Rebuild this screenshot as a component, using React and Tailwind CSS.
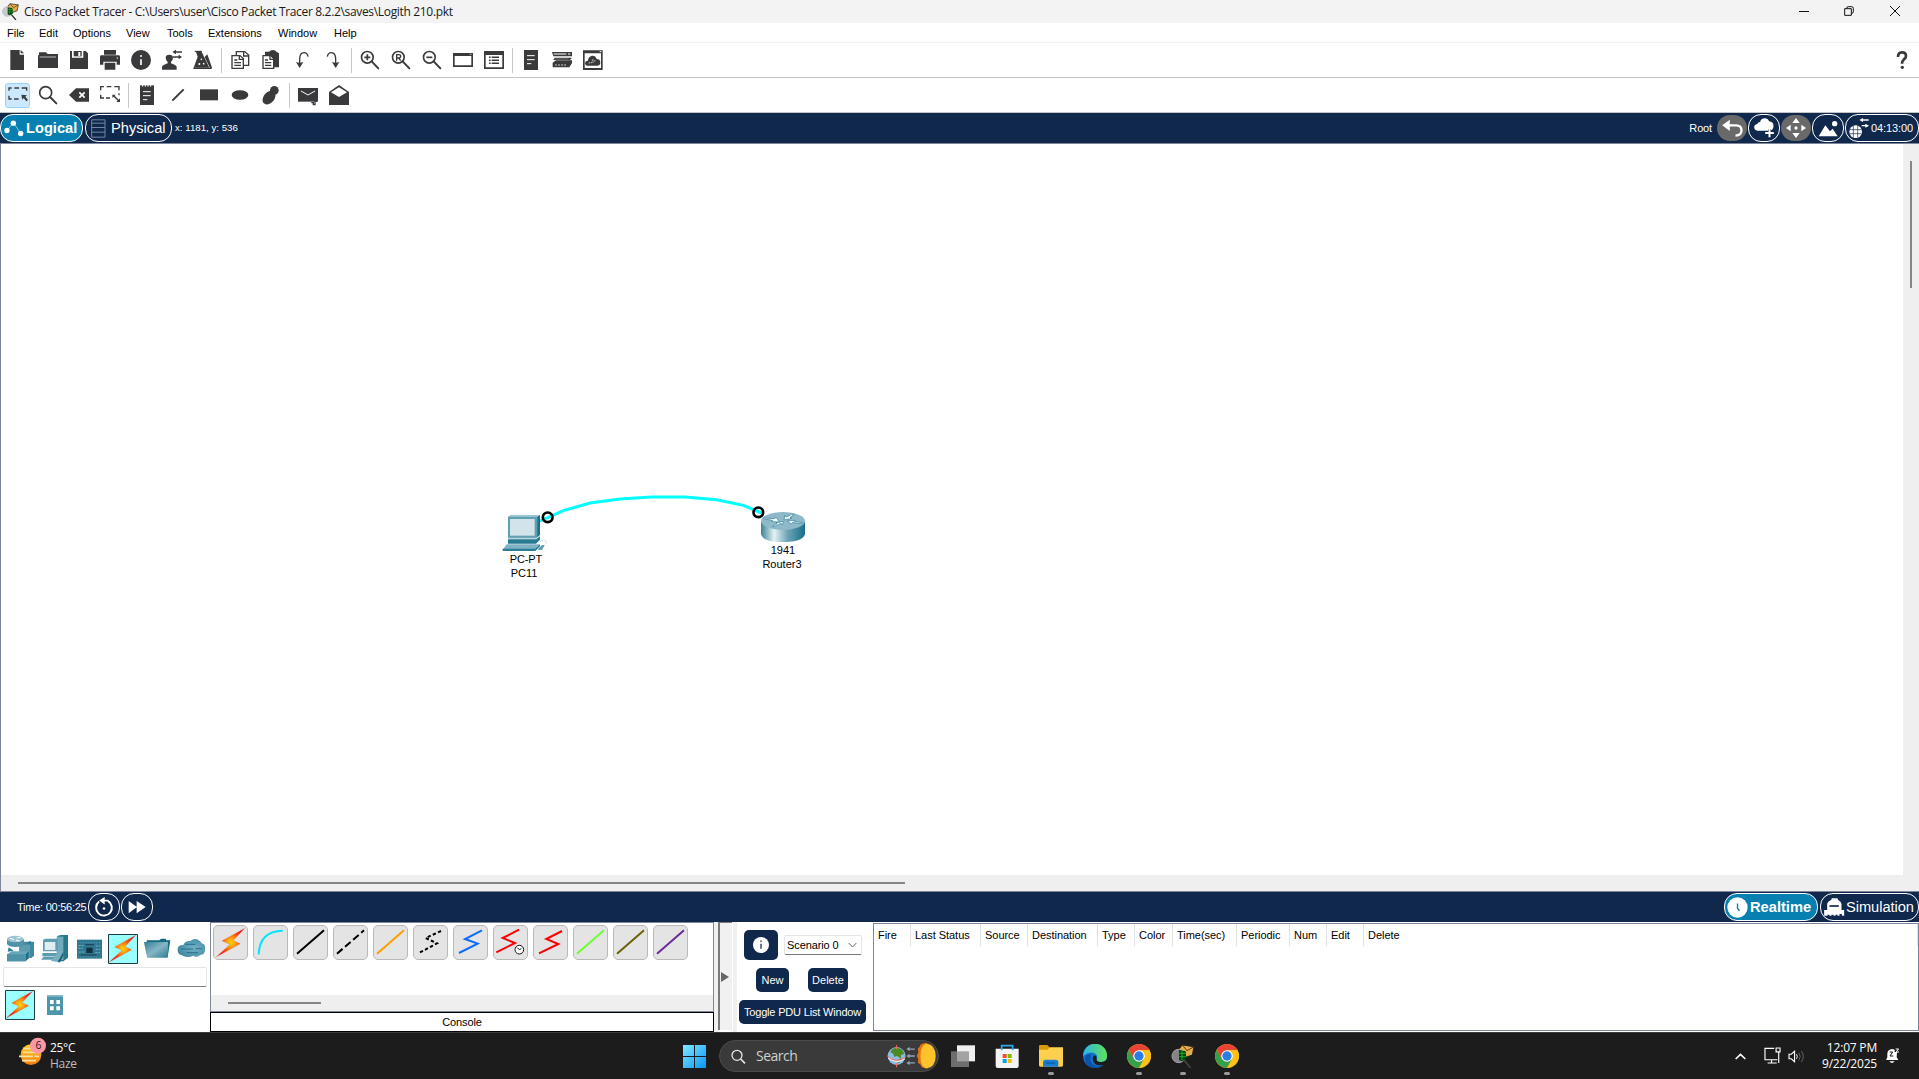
import React from "react";

const INK = "#3a3a3c";
const UI = "font-['Liberation_Sans',Arial,sans-serif]";
const SEGOE = "font-['Open_Sans','Noto_Sans',sans-serif]";

function Svg({ v, className = "", children, ...rest }) {
  return (
    <svg viewBox={v} className={"block shrink-0 " + className} fill={INK} {...rest}>
      {children}
    </svg>
  );
}

function Tool({ v, children, active }) {
  return (
    <div className="flex h-[25px] w-[31px] shrink-0 items-center justify-start pl-[4px]">
      <div className={active ? "flex h-[25px] w-[25px] pl-px items-center rounded-[3px] border border-[#99d1ff] bg-[#cce8ff]" : "flex h-[25px] items-center pl-[2px]"}>
        <Svg v={v} className="h-5 w-5 overflow-visible">{children}</Svg>
      </div>
    </div>
  );
}

function Sep() {
  return <div className="flex w-[6px] shrink-0 pl-[3px]"><div className="h-[25px] w-px bg-[#c8c8c8]" /></div>;
}

const lens = (x) => (
  <g fill="none" stroke={INK}>
    <circle cx={x} cy="52" r="17.5" strokeWidth="5" />
    <path d={`M${x + 13} 64l20 21`} strokeWidth="6" strokeLinecap="round" />
  </g>
);

function MainToolbar() {
  return (
    <div className="flex h-[35px] items-center border-b border-[#c3c3c3] pl-px">
      <Tool v="21 150 60 60"><path d="M31 150h28v14h13v46H31z" /><path d="M62 150l10 10H62z" /></Tool>
      <Tool v="114 150 60 60"><path d="M117 157h21l5 5h31v42h-57z" /><path d="M118 171h50" stroke="#fff" strokeWidth="2" /><path d="M114 166h4v38h-4z" /></Tool>
      <Tool v="207 150 60 60"><path d="M210 153h6v20h34v-20h7l7 7v47h-54z" /><path d="M221 153h24v16h-24z" /><path d="M235 156h6v12h-6z" fill="#fff" /></Tool>
      <Tool v="300 150 60 60"><path d="M312 150h36v14h-36zM300 170q0-4 4-4h52q4 0 4 4v24h-10v-9h-40v9h-10zM314 188h32v21h-32z" /><path d="M350 174h4" stroke="#fff" strokeWidth="3" /></Tool>
      <Tool v="393 150 60 60"><circle cx="423" cy="180" r="30" /><path d="M423 178v17" stroke="#fff" strokeWidth="5" /><circle cx="423" cy="168" r="3" fill="#fff" /></Tool>
      <Tool v="486 150 60 60"><path d="M486 209v-8q0-5 17-11v-4q-6-6-6-13 0-9 11-9t11 9q0 7-6 13v4q17 6 17 11v8z" /><path d="M527 156h19M519 171h20" stroke={INK} strokeWidth="4" /><path d="M517 156l11-7v14zM546 171l-10-7v14z" /></Tool>
      <Tool v="579 150 60 60">
        <path d="M587 153h16l5 8 20 42h-47l12-33z" /><path d="M584 154h22" stroke={INK} strokeWidth="3" /><path d="M611 168l6 3 13 32" fill="none" stroke="#fff" strokeWidth="2.5" /><path d="M614 171l8-8 14 40-5 3z" /><path d="M580 205h55" stroke={INK} strokeWidth="4" />
        <g fill="#fff"><circle cx="604" cy="178" r="2.5" /><circle cx="598" cy="192" r="3" /><circle cx="611" cy="191" r="2.5" /></g>
      </Tool>
      <Sep />
      <Tool v="690 150 60 60">
        <g fill="#fff" stroke={INK} strokeWidth="4"><path d="M709 155h25l12 10v31h-37z" /><path d="M731 155v13h14" /><path d="M696 167h24l10 9v29h-34z" /><path d="M718 167v11h11M703 180h9M703 188h20M703 196h20" /></g>
      </Tool>
      <Tool v="783 150 60 60">
        <path d="M795 155h12q4-5 12-5t10 5l8 5v42h-42z" /><g fill="#fff" stroke={INK} strokeWidth="4"><path d="M789 167h23l9 9v29h-32z" /><path d="M810 168v10h10M795 180h9M795 188h19M795 196h19" /></g>
      </Tool>
      <Tool v="876 150 60 60"><path d="M924 170q-2-12-12-12-13 0-13 20v14" fill="none" stroke={INK} strokeWidth="4" /><path d="M888 186l11 18 11-18q-11 5-22 0z" /></Tool>
      <Tool v="969 150 60 60"><path d="M982 170q2-12 12-12 13 0 13 20v14" fill="none" stroke={INK} strokeWidth="4" /><path d="M996 186l11 18 11-18q-11 5-22 0z" /></Tool>
      <Sep />
      <Tool v="420 30 60 60">{lens(442)}<path d="M433 52h18M442 43v18" stroke={INK} strokeWidth="5" /></Tool>
      <Tool v="513 30 60 60">{lens(535)}<path d="M530 62V44h6q6 0 6 5t-6 5h-6M536 54l6 8" fill="none" stroke={INK} strokeWidth="4" /></Tool>
      <Tool v="606 30 60 60">{lens(628)}<path d="M619 52h18" stroke={INK} strokeWidth="5" /></Tool>
      <Tool v="699 30 60 60"><path d="M699 39h60v42h-60zm5 9v28h50V48z" fillRule="evenodd" /><path d="M749 43h5" stroke="#fff" strokeWidth="2" /></Tool>
      <Tool v="792 30 60 60"><path d="M792 33h60v54h-60zm5 12v37h50V45z" fillRule="evenodd" /><path d="M807 52h5M815 52h22M807 61h5M815 61h22M807 70h5M815 70h22" stroke={INK} strokeWidth="4.5" /></Tool>
      <Sep />
      <Tool v="903 30 60 60"><path d="M912 30h42v60h-42z" /><path d="M921 47h23M921 59h23M921 71h13" stroke="#fff" strokeWidth="3" /></Tool>
      <Tool v="996 30 60 60"><path d="M996 36h60v13h-56zM1004 53h52l-6 7h-50zM998 68l10-7h48v8l-8 13h-50z" /><path d="M1001 42h38M1044 42h7" stroke="#fff" strokeWidth="3.5" /><path d="M1005 75h34" stroke="#999" strokeWidth="4" strokeDasharray="6 3" /><path d="M1005 57h40" stroke="#888" strokeWidth="2" /></Tool>
      <Tool v="1089 30 60 60"><path d="M1089 31h59v59h-59zm5 9v44h49V40z" fillRule="evenodd" /><path d="M1139 35h5" stroke="#fff" strokeWidth="3" /><path d="M1102 77q-7 0-7-7t9-8q0-12 12-15 11-1 14 10 10 0 11 10 0 10-8 10z" /><path d="M1106 69l16-3M1116 60l10 3" stroke="#aaa" strokeWidth="4" strokeDasharray="5 2" /></Tool>
      <Svg v="708 150 36 60" className="ml-auto mr-[11px] h-5 w-3"><path d="M714 171q0-14 12-14t12 11q0 6-7 11-5 4-5 12" fill="none" stroke={INK} strokeWidth="8" /><circle cx="727" cy="202" r="5" /></Svg>
    </div>
  );
}

function DrawToolbar() {
  return (
    <div className="flex h-[35px] items-center border-b border-[#c3c3c3] pl-px">
      <Tool v="21 255 60 60" active>
        <path d="M27 272v-8h8M43 264h14M65 264h15v8M27 287v10h8M42 297h14" fill="none" stroke={INK} strokeWidth="4" /><path d="M64 284l17 2-5 4 8 10-5 4-8-10-4 5z" />
      </Tool>
      <Tool v="114 255 60 60"><g fill="none" stroke={INK}><circle cx="137" cy="278" r="18" strokeWidth="5" /><path d="M150 291l19 19" strokeWidth="6" strokeLinecap="round" /></g></Tool>
      <Tool v="207 255 60 60"><path d="M207 285l21-20h39v40h-39z" /><path d="M238 277l16 16M254 277l-16 16" stroke="#fff" strokeWidth="5" /></Tool>
      <Tool v="300 255 60 60"><path d="M302 271v-11h10M320 260h14M343 260h14v11M302 284v10h10M318 294h12M357 280v6" fill="none" stroke={INK} strokeWidth="4" /><path d="M337 284h10l-3 3 12 12 4-4v11h-11l4-4-12-12-4 4z" /></Tool>
      <Sep />
      <Tool v="411 255 60 60"><path d="M420 256h42v59h-42z" /><path d="M428 255v5M436 255v5M444 255v5M452 255v5" stroke="#fff" strokeWidth="3" /><path d="M429 275h23M429 287h23M429 299h13" stroke="#fff" strokeWidth="3" /></Tool>
      <Tool v="504 255 60 60"><path d="M517 302l34-34" stroke={INK} strokeWidth="6" /></Tool>
      <Tool v="597 255 60 60"><path d="M600 268h54v33h-54z" /></Tool>
      <Tool v="690 255 60 60"><ellipse cx="720" cy="285" rx="25" ry="14.5" /></Tool>
      <Tool v="783 255 60 60"><circle cx="823" cy="271" r="13" /><ellipse cx="807" cy="293" rx="23" ry="16" transform="rotate(-48 807 293)" /></Tool>
      <Sep />
      <Tool v="234 135 60 60"><path d="M234 144h60v41h-60z" /><path d="M243 153l21 12 21-12" fill="none" stroke="#fff" strokeWidth="3" /><path d="M274 188h6v6h5v-10h5" fill="none" stroke={INK} strokeWidth="4" /></Tool>
      <Tool v="327 135 60 60"><path d="M327 156l30-21 30 21v39h-60z" /><path d="M333 157l24-15 24 15-24 14z" fill="#fff" /></Tool>
    </div>
  );
}

const pill = "flex h-7 shrink-0 items-center rounded-[13px] border border-white text-white";

function ViewBar() {
  return (
    <div className="flex h-[31px] items-center border-b border-[#80869a] bg-[#0f284c] text-[11px] text-white">
      <div className={pill + " w-[83px] bg-[#0680b0] pl-[3px]"}>
        <Svg v="13 355 60 50" className="h-[17px] w-5" fill="#fff"><path d="M22 386l19-23 23 32" fill="none" stroke="#8cc6dc" strokeWidth="3" /><circle cx="22" cy="386" r="8" /><circle cx="41" cy="364" r="8" /><circle cx="63" cy="395" r="8" /></Svg>
        <span className="ml-[2px] text-[14.67px] font-bold">Logical</span>
      </div>
      <div className={pill + " ml-[2px] w-[87px] pl-[5px]"}>
        <Svg v="275 356 45 56" className="h-[19px] w-[15px]" fill="none"><path d="M277 358h40v52h-40zM277 368h40M277 381h40M277 395h40" stroke="#7486a3" strokeWidth="3" /></Svg>
        <span className="ml-[5px] text-[14.67px]">Physical</span>
      </div>
      <span className="ml-[3px] text-[9.7px]">x: 1181, y: 536</span>
      <span className="ml-auto mr-[5px] tracking-[-0.15px]">Root</span>
      <div className="flex h-[26px] w-[30px] items-center justify-center rounded-[13px] bg-[#696969]">
        <Svg v="186 357 62 54" className="h-[18px] w-[21px]" fill="#fff"><path d="M186 376l23-17v34z" /><path d="M204 376h24q16 0 16 15 0 15-18 16" fill="none" stroke="#fff" strokeWidth="7" /></Svg>
      </div>
      <div className={pill + " ml-px w-8 justify-center"}>
        <Svg v="282 356 62 60" className="h-5 w-[21px]" fill="#fff"><path d="M292 394q-10-1-10-10 0-8 9-10 2-6 9-6 2-11 14-11 9 0 13 9 12 1 13 13 0 15-14 15z" /><path d="M328 390v24M316 401h25" stroke="#0f284c" strokeWidth="9" /><path d="M328 388v26M315 401h26" stroke="#fff" strokeWidth="6" /></Svg>
      </div>
      <div className="ml-px flex h-[26px] w-[30px] items-center justify-center rounded-[13px] bg-[#696969]">
        <Svg v="378 354 60 60" className="h-5 w-5" fill="#fff"><path d="M408 354l11 15h-22zM408 414l11-15h-22zM378 384l14-10v20zM438 384l-14-10v20z" /><circle cx="408" cy="384" r="5" /></Svg>
      </div>
      <div className={pill + " ml-px w-8 justify-center"}>
        <Svg v="474 356 60 54" className="h-[18px] w-5" fill="#fff"><circle cx="524" cy="370" r="8" /><path d="M476 408l20-33 14 18 8-8 15 23z" /></Svg>
      </div>
      <div className={pill + " ml-px w-[74px] pl-[3px]"}>
        <Svg v="568 354 60 60" className="h-5 w-5" fill="#fff"><circle cx="588" cy="395" r="19" /><path d="M571 389h34M571 401h34M581 377v36M594 377v36" stroke="#0f284c" strokeWidth="2" /><path d="M606 360h21M606 377h18" stroke="#fff" strokeWidth="4" /><path d="M599 360l11-6v12zM628 377l-11-6v12z" /></Svg>
        <span className="ml-[2px] text-[11px] tracking-[-0.1px]">04:13:00</span>
      </div>
    </div>
  );
}

function Canvas() {
  return (
    <div className="flex h-[748px] flex-col border-b border-l border-[#80869a]">
      <div className="flex h-[731px]">
        <div className={"relative flex-1 bg-white text-[11px] leading-[14px] text-black " + UI}>
          <Svg v="0 0 1050 330" className="absolute left-[479px] top-[336px] h-[110px] w-[350px]">
            <defs>
              <linearGradient id="rt"><stop offset="0" stopColor="#3a8299" /><stop offset=".3" stopColor="#e6f2f5" /><stop offset=".6" stopColor="#6fa4b6" /><stop offset="1" stopColor="#157089" /></linearGradient>
            </defs>
            <path d="M180 123L250 92 330 69 420 57 515 51h100l95 8 80 17 55 23" fill="none" stroke="#00ffff" strokeWidth="9" />
            <path d="M84 111l10-6h86v60l-10 8H84z" fill="#1f6f88" /><path d="M84 111l8-6h88l-8 6z" fill="#9ac3d0" /><path d="M84 111h88v60H84z" fill="#5f9fb3" /><path d="M90 117h74v50H90z" fill="#d3e3ea" />
            <path d="M84 178h84l12-9v10l-12 12H84z" fill="#267a92" /><path d="M84 173h86v4H84z" fill="#b9d5dd" />
            <path d="M68 209l12-16h100l-12 16z" fill="#7fb3c3" /><path d="M68 206h98l14-13v6l-14 14H68z" fill="#2b7e96" />
            <path d="M176 205l10-10h8l-8 15h-12z" fill="#5e9db0" /><path d="M180 186q2-8 14-5 10 5 3 10" fill="none" stroke="#ccdde2" strokeWidth="3" />
            <path d="M843 124v38q4 24 65 24t67-24v-38z" fill="url(#rt)" /><ellipse cx="909" cy="123" rx="66" ry="27" fill="#8db9c9" />
            <g fill="#fff" stroke="#2b7e96" strokeWidth="2"><path d="M850 114l34 2 3-5 12 15-24-1 3-4-25-4zM935 103l-15 8-6-4-2 13 24-5-6-3 12-7zM967 132l-29-5-4 5-12-9 23-2-2 3 24 4zM884 140l18-10 6 4 2-10-22 4 4 3-14 8z" /></g>
            <circle cx="203" cy="112" r="14.5" fill="none" stroke="#000" strokeWidth="8" /><circle cx="835" cy="97" r="14.5" fill="none" stroke="#000" strokeWidth="8" />
          </Svg>
          <div className="absolute left-[485px] top-[408px] flex w-[80px] flex-col items-center"><span className="tracking-[-0.15px]">PC-PT</span><span className="mr-[4px]">PC11</span></div>
          <div className="absolute left-[741px] top-[399px] flex w-[80px] flex-col items-center"><span className="ml-[2px]">1941</span><span>Router3</span></div>
        </div>
        <div className="flex w-4 justify-center bg-[#efefef] pt-[17px]"><div className="h-[127px] w-[2px] bg-[#868686]" /></div>
      </div>
      <div className="flex h-4 items-center bg-[#efefef] pl-[17px]"><div className="h-[2px] w-[887px] bg-[#868686]" /></div>
    </div>
  );
}

function TimeBar() {
  return (
    <div className="flex h-[30px] items-center bg-[#0f284c] text-white">
      <span className="ml-[17px] w-[71px] whitespace-nowrap text-[11px] tracking-[-0.25px]">Time: 00:56:25</span>
      <div className={pill + " w-8 justify-center"}>
        <Svg v="282 110 60 64" className="h-[21px] w-5" fill="#fff"><path d="M297 124a24 24 0 1 0 27-2" fill="none" stroke="#fff" strokeWidth="6" /><path d="M297 121l17-11v23z" /><path d="M307 121h18" stroke="#fff" strokeWidth="5" /><circle cx="312" cy="145" r="4" /></Svg>
      </div>
      <div className={pill + " ml-px w-8 justify-center"}>
        <Svg v="384 120 54 42" className="h-[14px] w-[18px]" fill="#fff"><path d="M386 123l25 18-25 19zM410 123l27 18-27 19z" /></Svg>
      </div>
      <div className={pill + " ml-auto w-[94px] bg-[#0680b0] pl-[2px]"}>
        <Svg v="262 109 62 62" className="h-[21px] w-[21px]" fill="#fff"><circle cx="293" cy="140" r="30" /><path d="M293 128v14l6 8" fill="none" stroke="#0680b0" strokeWidth="4" /></Svg>
        <span className="ml-[2px] text-[14.67px] font-bold">Realtime</span>
      </div>
      <div className={pill + " ml-[2px] w-[99px] pl-[3px]"}>
        <Svg v="552 114 62 54" className="h-[18px] w-[21px]" fill="#fff"><path d="M561 150v-19q3-9 12-11l2-5h17l2 5q8 3 10 11v19h8v17h-7v-5h-7v5h-6v-3h-6v3h-6v-3h-6v3h-6v-3h-6v3h-10v-17z" /><path d="M568 138h28" stroke="#0f284c" strokeWidth="5" /></Svg>
        <span className="ml-px text-[14.67px] tracking-[-0.05px]">Simulation</span>
      </div>
    </div>
  );
}

function Bolt({ boxed }) {
  return (
    <Svg v="0 0 90 90" className={boxed ? "h-[30px] w-[30px]" : "h-[32px] w-[32px]"}>
      <defs><radialGradient id="bolt" gradientUnits="userSpaceOnUse" cx="45" cy="44" r="44"><stop offset="0" stopColor="#ffd800" /><stop offset=".3" stopColor="#ff9a10" /><stop offset=".6" stopColor="#ff4a10" /><stop offset="1" stopColor="#f00018" /></radialGradient></defs>
      {boxed && <path d="M1.5 1.5h87v87h-87z" fill="#99ffff" stroke="#1c3c44" strokeWidth="3" />}
      <path d="M83 4L20 39l22 10L4 84l67-37-20-9z" fill="url(#bolt)" stroke="#d9743a" strokeWidth="1" />
    </Svg>
  );
}

function DevicePalette() {
  return (
    <div className="flex w-[210px] shrink-0 flex-col">
      <div className="flex h-[45px] items-start pt-[12px]">
        <Svg v="18 222 90 90" className="ml-[6px] h-[30px] w-[30px]">
          <path d="M58 255l8-10h36v42l-8 7H58z" fill="#3f8aa0" /><path d="M58 254h32v40H58z" fill="#5d9cb0" />
          <path d="M21 238v14q4 9 26 9t25-9v-14z" fill="#4f93a8" /><ellipse cx="46" cy="237" rx="25" ry="10" fill="#9cc5d2" /><path d="M30 235l12 4M50 234l12-2M48 241l12 2" stroke="#fff" strokeWidth="3" />
          <path d="M21 283l14-9h50l-8 30H21z" fill="#69a7ba" /><path d="M77 283l9-9v21l-9 9z" fill="#1f6f88" /><path d="M21 283h56v21H21z" fill="#4e93a8" /><path d="M26 262l-3 13 18-3zM80 248l12-6v12z" fill="#2b7e96" />
        </Svg>
        <Svg v="120 222 90 90" className="ml-[4px] h-[30px] w-[30px]">
          <path d="M172 228l10-3h22v68l-14 11h-18z" fill="#27788f" /><path d="M170 230h20v70h-20z" fill="#70aabb" /><path d="M129 240l6-4h38v38h-44z" fill="#5c9db0" /><path d="M134 246h32v24h-32z" fill="#e0edf0" />
          <path d="M127 279h44l8-6v10l-8 6h-44zM123 299l8-9h40l-8 9z" fill="#5d9cb0" /><path d="M153 303l24-32 13 4-17 31z" fill="#78b0c0" /><path d="M173 307l17-32v10l-10 22z" fill="#165e75" />
        </Svg>
        <Svg v="228 222 78 90" className="ml-[6px] h-[30px] w-[26px]">
          <path d="M231 239h75v57h-75z" fill="#2f7690" /><path d="M259 263h19v16h-19z" fill="#12303e" /><path d="M233 248h70M233 291h70" stroke="#7fb0c0" strokeWidth="2" strokeDasharray="3 5" /><path d="M235 257h16M235 265h14M287 258h14M287 268h14M236 276h18M286 278h14" stroke="#6fb1c4" strokeWidth="3" strokeDasharray="7 3" /><path d="M242 285h48M256 254h26" stroke="#173e4d" strokeWidth="3" />
        </Svg>
        <div className="ml-[6px]"><Bolt boxed /></div>
        <Svg v="429 222 87 90" className="ml-[5px] h-[30px] w-[29px]">
          <defs><linearGradient id="fold" x2="1" y2="1"><stop offset="0" stopColor="#2d7d95" /><stop offset=".5" stopColor="#86b6c6" /><stop offset="1" stopColor="#2d7d95" /></linearGradient></defs>
          <path d="M440 241h38l5-5h15v5h13l-8 50h-58z" fill="#146a80" /><path d="M432 246h72l-1 47h-62z" fill="url(#fold)" />
        </Svg>
        <Svg v="531 222 87 90" className="ml-[5px] h-[30px] w-[29px]">
          <defs><radialGradient id="cld" cx=".6" cy=".5" r=".6"><stop offset="0" stopColor="#76b2c8" /><stop offset="1" stopColor="#3f8aa3" /></radialGradient></defs>
          <path d="M545 286q-14-5-12-20 2-12 17-11 5-14 21-12 12-10 24-3 8 4 10 10 12 3 10 16 2 17-15 19-10 9-20 2-18 9-35-1z" fill="url(#cld)" /><path d="M543 267h37M556 253h30M560 278h34M586 266h20" stroke="#2c6e85" strokeWidth="3" />
        </Svg>
      </div>
      <div className="ml-[3px] h-5 w-[204px] rounded-[2px] border border-[#e5e5e5] border-b-[#808080] bg-white" />
      <div className="flex items-start pl-[5px] pt-[3px]">
        <Bolt boxed />
        <Svg v="141 405 48 60" className="ml-[12px] mt-[5px] h-5 w-4"><path d="M141 406h48v59h-48z" fill="#4d95ad" /><path d="M141 406h48v4h-48z" fill="#8dbccb" /><path d="M150 420h11v12h-11zM169 420h11v12h-11zM150 439h11v12h-11zM169 439h11v12h-11z" fill="#fff" /></Svg>
      </div>
    </div>
  );
}

const cables = [
  { c: "#000", d: "M12 86L93 16" },
  { c: "#000", d: "M12 86L93 16", dash: "22 10" },
  { c: "#ff9c00", d: "M12 86L93 16" },
  { c: "#000", d: "M84 18L38 39l34 16-56 30", dash: "10 7" },
  { c: "#0a6cff", d: "M87 16L36 42l38 14-56 28" },
  { c: "#ff0000", d: "M78 14L29 39l37 15-56 28", clock: true },
  { c: "#ff0000", d: "M87 18L40 42l36 15-58 28" },
  { c: "#6cff2e", d: "M12 86L93 16" },
  { c: "#6b6208", d: "M12 86L93 16" },
  { c: "#6a2a9a", d: "M12 86L93 16" },
];
const cableBox = "flex h-[35px] w-[35px] shrink-0 items-center justify-center rounded-[5px] border border-[#b9b9b9] bg-[#e4e4e4]";

function CablePanel() {
  return (
    <div className="flex w-[504px] shrink-0 flex-col">
      <div className="flex h-[90px] flex-col justify-between border border-[#80869a]">
        <div className="flex gap-[5px] pl-[2px] pt-[2px]">
          <div className={cableBox}><Bolt /></div>
          <div className={cableBox}><Svg v="0 0 105 105" className="h-[35px] w-[35px]" fill="none"><path d="M17 88Q20 18 89 17" stroke="#00e5ff" strokeWidth="6" /></Svg></div>
          {cables.map((k, i) => (
            <div key={i} className={cableBox}>
              <Svg v="0 0 105 105" className="h-[35px] w-[35px]" fill="none">
                <path d={k.d} stroke={k.c} strokeWidth="6" strokeDasharray={k.dash} />
                {k.clock && <g stroke="#111" strokeWidth="3"><circle cx="79" cy="74" r="13" fill="#fff" /><path d="M73 68l6 6 6-3" /></g>}
              </Svg>
            </div>
          ))}
        </div>
        <div className="flex h-4 items-center bg-[#efefef] pl-[17px]"><div className="h-[2px] w-[93px] bg-[#868686]" /></div>
      </div>
      <div className="flex h-5 items-center justify-center border border-black text-[11px] tracking-[-0.1px]">Console</div>
    </div>
  );
}

const btn = "flex items-center justify-center rounded-[5px] bg-[#0f284c] text-[11px] text-white whitespace-nowrap";
const columns = [
  ["Fire", "w-[37px]"], ["Last Status", "w-[70px]"], ["Source", "w-[47px]"], ["Destination", "w-[70px]"], ["Type", "w-[37px]"],
  ["Color", "w-[38px]"], ["Time(sec)", "w-[64px]"], ["Periodic", "w-[53px]"], ["Num", "w-[37px]"], ["Edit", "w-[37px]"],
];

function ScenarioPanel() {
  return (
    <div className="flex min-w-0 flex-1">
      <div className="w-[4px] bg-[#f0f0f0]" />
      <div className="flex h-[108px] w-[14px] items-center border-l-2 border-t border-[#7a7a7a] bg-[#f1f1f1] pl-px">
        <Svg v="0 0 24 30" className="h-[10px] w-2" fill="#666"><path d="M0 0l24 15L0 30z" /></Svg>
      </div>
      <div className="mr-[2px] w-[5px] border-r-4 border-[#f0f0f0]" />
      <div className="flex w-[127px] flex-col">
        <div className="flex items-center pl-[5px] pt-[8px]">
          <div className={btn + " h-[30px] w-[34px]"}>
            <Svg v="0 0 48 48" className="h-4 w-4" fill="#fff"><circle cx="24" cy="24" r="24" /><path d="M24 20v15" stroke="#69788e" strokeWidth="6" /><circle cx="24" cy="13" r="3" fill="#69788e" /></Svg>
          </div>
          <div className="ml-[6px] flex h-5 w-[78px] items-center justify-between whitespace-nowrap rounded-[2px] border border-[#e5e5e5] border-b-[#777] pl-[2px] pr-[4px] text-[11px] tracking-[-0.1px]">
            Scenario 0
            <Svg v="0 0 27 18" className="h-[6px] w-[9px]" fill="none"><path d="M2 3l11.500 12L25 3" stroke="#666" strokeWidth="3" /></Svg>
          </div>
        </div>
        <div className="flex pl-[17px] pt-[8px]">
          <div className={btn + " h-6 w-[33px]"}>New</div>
          <div className={btn + " ml-[19px] h-6 w-10"}>Delete</div>
        </div>
        <div className={btn + " mt-[8px] h-6 w-[127px] tracking-[-0.18px]"}>Toggle PDU List Window</div>
      </div>
      <div className="ml-[7px] mt-px h-[108px] flex-1 border border-[#80869a]">
        <div className="flex h-[22px] text-[11px] tracking-[-0.03px]">
          {columns.map(([name, w]) => (
            <div key={name} className={"flex shrink-0 items-center border-r border-[#e2e2e2] pl-[4px] " + w}>{name}</div>
          ))}
          <div className="flex flex-1 items-center border-r border-[#e2e2e2] pl-[4px]">Delete</div>
        </div>
      </div>
    </div>
  );
}

function Chrome() {
  return (
    <Svg v="0 0 72 72" className="h-6 w-6">
      <circle cx="36" cy="36" r="36" fill="#fbc116" /><path d="M5 18A36 36 0 0 1 67 18H36L21 45z" fill="#ea4335" /><path d="M5 18a36 36 0 0 0 31 54l15-27H21z" fill="#34a04a" /><path d="M36 18h31a36 36 0 0 1-31 54l15-27z" fill="#fbc116" />
      <circle cx="36" cy="36" r="17.500" fill="#fff" /><circle cx="36" cy="36" r="14" fill="#2b7de9" />
    </Svg>
  );
}

function TracerLogo({ small }) {
  return (
    <Svg v="573 42 72 72" className={small ? "h-[17px] w-[17px]" : "h-6 w-6"}>
      <path d="M612 90l20 24" stroke={small ? "#222" : "#444"} strokeWidth="5" />
      <path d="M598 56l9-11 35 5-5 25-20 7-19-6z" fill="#e5ac4c" stroke="#222" strokeWidth="3" /><path d="M607 45l14 17 21-12" fill="none" stroke="#5b3d10" strokeWidth="3" />
      <circle cx="596" cy="78" r="20" fill={small ? "#c9cdc9" : "#858585"} stroke={small ? "#aaa" : "#a5a5a5"} strokeWidth="3" />
      <path d="M597 60l20 4 2 22-13 8-9-4z" fill="#063f0c" /><path d="M598 70h19M598 80h19M606 62v28" stroke="#12b52a" strokeWidth="3" />
    </Svg>
  );
}

function TaskIcon({ children, running }) {
  return (
    <div className="flex h-full w-11 flex-col items-center pt-[11px]">
      <div className="flex h-6 items-center">{children}</div>
      {running && <div className="mt-[4px] h-[3px] w-[6px] rounded-full bg-[#9b9b9b]" />}
    </div>
  );
}

function Taskbar() {
  return (
    <div className={"flex h-[47px] border-t border-[#3c3c3c] bg-[#1c1c1c] text-[12px] text-white " + SEGOE}>
      <div className="flex w-[683px] pl-[18px] pt-[4px]">
        <Svg v="54 532 87 87" className="h-[29px] w-[29px]">
          <defs><linearGradient id="haze" x2="0" y2="1"><stop offset="0" stopColor="#ffcf22" /><stop offset="1" stopColor="#f57c0a" /></linearGradient></defs>
          <circle cx="93" cy="585" r="31" fill="url(#haze)" /><path d="M70 567h30M69 578h49M57 590h42M103 590h14M66 603h42" stroke="#f8dfa4" strokeWidth="5" />
          <circle cx="114" cy="558" r="24" fill="#fe98a4" /><text x="115" y="569" textAnchor="middle" fontSize="31" fill="#222" fontFamily="Open Sans">6</text>
        </Svg>
        <div className="ml-[3px] mt-[3px] leading-4 tracking-[-0.3px]"><div>25°C</div><div className="text-[#bdbdbd]">Haze</div></div>
      </div>
      <Svg v="0 0 69 69" className="mt-[12px] h-[23px] w-[23px]">
        <defs><linearGradient id="win" x2="1" y2="1"><stop offset="0" stopColor="#7feaff" /><stop offset="1" stopColor="#0a94f8" /></linearGradient></defs>
        <path d="M0 0h33v33H0zM36 0h33v33H36zM0 36h33v33H0zM36 36h33v33H36z" fill="url(#win)" />
      </Svg>
      <div className="ml-[13px] mt-[7px] flex h-8 w-[220px] items-center rounded-full border border-[#4a4a4a] bg-[#3a3a3a] pl-[11px]">
        <Svg v="0 0 45 45" className="h-[15px] w-[15px]" fill="none"><circle cx="18" cy="19" r="15" stroke="#e6e6e6" strokeWidth="4" /><path d="M29 30l13 13" stroke="#e6e6e6" strokeWidth="5" /></Svg>
        <span className="-mt-px ml-[10px] text-[14px] tracking-[-0.5px] text-[#cfcfcf]">Search</span>
        <Svg v="648 36 154 84" className="ml-auto mr-px h-7 w-[51px]">
          <circle cx="680" cy="78" r="27" fill="#8dbbe2" /><path d="M666 58q14-9 30 0l8 14-10 2-2 12-9-8-10 2-3-9-9-4z" fill="#4a8a22" /><path d="M686 88l10-3-6 12-8 3z" fill="#4a8a22" /><path d="M655 84q24 20 49 2" fill="none" stroke="#dbe8f4" strokeWidth="5" /><path d="M652 78q24 24 55 4M680 45v12M680 100v12" fill="none" stroke="#ff6a55" strokeWidth="3" />
          <g fill="#8fa6bb"><path d="M710 57l9-7v5h16v4h-16v5zM710 78l9-7v5h16v4h-16v5zM710 99l9-7v5h16v4h-16v5z" /></g>
          <path d="M772 39q-20 0-22 10l-6 8 2 9-5 11 5 12-2 9 8 6 4 8 16 4z" fill="#e8730c" /><path d="M770 40q28 4 28 38t-28 38q-18-5-18-38t18-38z" fill="#fcc32c" />
        </Svg>
      </div>
      <div className="ml-[2px] flex">
        <TaskIcon><Svg v="843 44 72 66" className="h-[22px] w-6"><path d="M861 45h54v48h-54z" fill="#f0f0f0" /><path d="M843 63h54v47h-54z" fill="#8a8a8a" fillOpacity=".75" /></Svg></TaskIcon>
        <TaskIcon><Svg v="43 42 72 72" className="h-6 w-6"><path d="M45 56h69v52q0 6-6 6H51q-6 0-6-6z" fill="#f3f3f3" /><path d="M63 61V47h33v14" fill="none" stroke="#2aa9ee" strokeWidth="5" /><path d="M66 72h12v12H66z" fill="#f25022" /><path d="M81 72h12v12H81z" fill="#7fba00" /><path d="M66 87h12v12H66z" fill="#00a4ef" /><path d="M81 87h12v12H81z" fill="#ffb900" /></Svg></TaskIcon>
        <TaskIcon running><Svg v="177 42 72 72" className="h-6 w-6"><path d="M177 48q0-3 3-3h22l8 8v14h-33z" fill="#d99a06" /><path d="M177 59h26l6-7h40v54q0 4-4 4h-64q-4 0-4-4z" fill="#ffd04d" /><path d="M189 110V97q0-8 8-8h30q8 0 8 8v13z" fill="#1a7fd0" /><path d="M198 99h28" stroke="#0d5aa0" strokeWidth="4" /></Svg></TaskIcon>
        <TaskIcon><Svg v="309 42 72 72" className="h-6 w-6">
          <defs><linearGradient id="ed"><stop offset="0" stopColor="#2bb5ea" /><stop offset="1" stopColor="#62e256" /></linearGradient></defs>
          <circle cx="345" cy="78" r="36" fill="#0e70cf" /><path d="M309 78a36 36 0 0 1 72-2q1 18-17 20-16 0-14-10 5-8-4-15-18-10-37 7z" fill="url(#ed)" /><path d="M333 75q-7 19 8 30 14 8 33-4-10 13-29 13-30-5-30-28 4-16 18-11z" fill="#0b52a8" /><path d="M350 86q-2 10 14 10 12-1 15-7l2 8-7 7q-33 8-36-18 0-7 6-10 7 2 6 10z" fill="#1c1c1c" />
        </Svg></TaskIcon>
        <TaskIcon running><Chrome /></TaskIcon>
        <TaskIcon running><TracerLogo /></TaskIcon>
        <TaskIcon running><Chrome /></TaskIcon>
      </div>
      <div className="ml-auto flex items-start pr-[19px]">
        <Svg v="0 0 33 21" className="mt-[20px] h-[7px] w-[11px]" fill="none"><path d="M2 18L16.500 4 31 18" stroke="#fff" strokeWidth="5" /></Svg>
        <Svg v="374 562 50 52" className="ml-[18px] mt-[14px] h-[17px] w-[17px]" fill="none"><path d="M404 566h-28v35h38M396 601v9M384 611h28M418 578v33M410 565h12v12h-12z" stroke="#fff" strokeWidth="3.5" /></Svg>
        <Svg v="446 568 50 40" className="ml-[7px] mt-[17px] h-[13px] w-[17px]" fill="none"><path d="M448 581h7l10-9v32l-10-9h-7z" stroke="#fff" strokeWidth="3.5" /><path d="M471 581q5 7 0 14" stroke="#fff" strokeWidth="3" /><path d="M478 576q9 12 0 24M486 571q12 17 0 34" stroke="#666" strokeWidth="3" /></Svg>
        <div className="ml-[15px] mt-[7px] w-[57px] whitespace-nowrap text-right leading-4 tracking-[-0.2px]"><div>12:07 PM</div><div>9/22/2025</div></div>
        <Svg v="735 566 45 48" className="ml-[8px] mt-[15px] h-4 w-[15px]" fill="#fff"><path d="M738 602l4-8v-12q2-12 14-13 6 0 8 3v6h7l-1 16 5 8zM748 606h16q-8 10-16 0z" /><path d="M749 578h9l-8 12h10" fill="none" stroke="#1c1c1c" strokeWidth="3" /><path d="M767 569h9l-8 9h9" fill="none" stroke="#fff" strokeWidth="3" /></Svg>
      </div>
    </div>
  );
}

export default function App() {
  return (
    <div className={"flex h-[1079px] w-[1919px] flex-col overflow-hidden bg-white text-black " + UI}>
      <div className={"flex h-[23px] items-center bg-[#f3f3f3] pl-[2px] text-[12px] " + SEGOE}>
        <TracerLogo small />
        <span className="ml-[5px] whitespace-nowrap tracking-[-0.33px] text-[#1a1a1a]">Cisco Packet Tracer - C:\Users\user\Cisco Packet Tracer 8.2.2\saves\Logith 210.pkt</span>
        <Svg v="0 0 30 30" className="-mt-[2px] ml-auto h-[10px] w-[10px]" fill="none"><path d="M0 16.500h30" stroke="#111" strokeWidth="3" /></Svg>
        <Svg v="0 0 30 30" className="-mt-[2px] ml-[35px] h-[10px] w-[10px]" fill="none"><path d="M2 8h20v20H2zM8 7q0-5 5-5h10q5 0 5 5v10q0 5-5 5" stroke="#111" strokeWidth="3" /></Svg>
        <Svg v="0 0 30 30" className="-mt-[2px] ml-[36px] mr-[19px] h-[10px] w-[10px]" fill="none"><path d="M0 0l30 30M30 0L0 30" stroke="#111" strokeWidth="3" /></Svg>
      </div>
      <div className="flex h-5 items-center border-b border-[#f0f0f0] pl-[7px] pt-[2px] text-[11px]">
        <span className="w-8">File</span><span className="w-[34px]">Edit</span><span className="w-[53px]">Options</span><span className="w-[41px]">View</span><span className="w-[41px]">Tools</span><span className="w-[70px]">Extensions</span><span className="w-[56px]">Window</span><span>Help</span>
      </div>
      <MainToolbar />
      <DrawToolbar />
      <ViewBar />
      <Canvas />
      <TimeBar />
      <div className="flex h-[110px]">
        <DevicePalette />
        <CablePanel />
        <ScenarioPanel />
      </div>
      <Taskbar />
    </div>
  );
}
